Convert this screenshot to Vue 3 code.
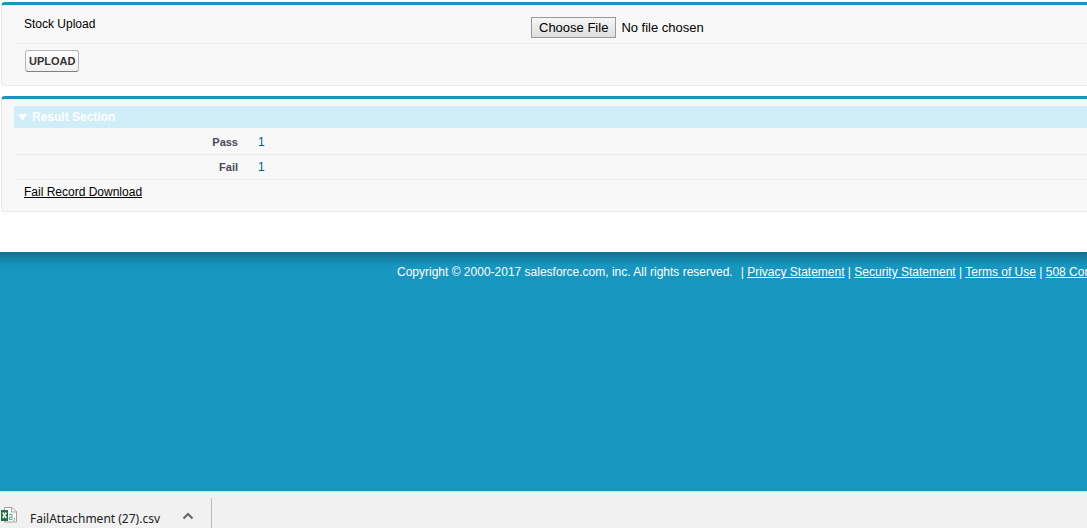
<script setup>
import { ref } from 'vue'

const open = ref(true)
const results = [
  { label: 'Pass', value: 1 },
  { label: 'Fail', value: 1 },
]
const links = ['Privacy Statement', 'Security Statement', 'Terms of Use', '508 Compliance']
</script>

<template>
  <div class="page">
    <main class="content">
      <form class="panel upload" @submit.prevent>
        <div class="file-row">
          <label class="cell" for="stock-file">Stock Upload</label>
          <input id="stock-file" class="file" type="file" />
        </div>
        <div class="actions">
          <button class="upload-btn" type="submit">UPLOAD</button>
        </div>
      </form>

      <section class="panel result">
        <h3 class="heading">
          <button class="toggle" type="button" :aria-expanded="open" @click="open = !open">
            <svg width="9" height="7" viewBox="0 0 9 7" aria-hidden="true">
              <path d="M0 0h9L4.5 7z" fill="#fff" />
            </svg>
            Result Section
          </button>
        </h3>
        <table v-show="open" class="results">
          <tbody>
            <tr v-for="r in results" :key="r.label">
              <th scope="row">{{ r.label }}</th>
              <td>{{ r.value }}</td>
            </tr>
          </tbody>
        </table>
        <div class="download"><a href="#">Fail Record Download</a></div>
      </section>
    </main>

    <footer class="footer">
      <span class="copyright">Copyright © 2000-2017 salesforce.com, inc. All rights reserved.</span>
      <template v-for="l in links" :key="l">| <a href="#">{{ l }}</a>{{ ' ' }}</template>
    </footer>

    <div class="shelf">
      <div class="item">
        <svg class="sheet" width="18" height="18" viewBox="0 0 18 18" aria-hidden="true">
          <path d="M4.5 1.500h7.500l4.500 4v10.500h-12z" fill="#fff" stroke="#a3a3a3" />
          <path d="M11.500 1.500v4.500h5" fill="none" stroke="#a3a3a3" />
          <path d="M1 4h7v11H1z" fill="#1e7145" />
          <path d="M2.700 6.500l3.600 5.500M6.300 6.500l-3.600 5.500" stroke="#fff" stroke-width="1.500" />
          <path d="M9 8.500h3v5H9.500V11H12M14.500 12v1.500l-1 1.500" fill="none" stroke="#5fae83" />
        </svg>
        <span class="name">FailAttachment (27).csv</span>
        <button class="more" type="button" aria-label="Download options">
          <svg width="12" height="8" viewBox="0 0 12 8" aria-hidden="true">
            <path d="M1.500 6.500L6 2l4.500 4.500" fill="none" stroke="#666" stroke-width="2" />
          </svg>
        </button>
      </div>
    </div>
  </div>
</template>

<style>
body {
  margin: 0;
  background: #fff;
}
</style>

<style scoped>
.page {
  display: flex;
  flex-direction: column;
  box-sizing: border-box;
  min-height: 100vh;
  padding-top: 2px;
  overflow: hidden;
  font: 12px/16px "Liberation Sans", Arial, sans-serif;
  color: #000;
}
.content {
  display: flex;
  flex-direction: column;
  gap: 10px;
  padding: 0 0 40px 1px;
}
.panel {
  box-sizing: border-box;
  padding-left: 12px;
  border: 1px solid #eaeaea;
  border-top: 3px solid #1797c0;
  border-right: 0;
  border-radius: 4px 0 0 4px;
  background: #f8f8f8;
}
.file-row {
  display: grid;
  grid-template-columns: 517px 1fr;
  align-items: start;
  height: 38px;
  border-bottom: 1px solid #ececec;
}
.cell {
  padding: 11px 10px 0;
}
.file {
  margin-top: 12px;
  font: 13px/15px "Liberation Sans", Arial, sans-serif;
}
.file::file-selector-button {
  box-sizing: border-box;
  height: 21px;
  margin: 0 5px 0 0;
  padding: 1px 7px;
  border: 1px solid #999;
  border-radius: 0;
  background: linear-gradient(#f6f6f6, #dedede);
  color: #000;
  font: inherit;
}
.actions {
  padding: 6px 11px 13px;
}
.upload-btn {
  display: block;
  box-sizing: border-box;
  height: 22px;
  padding: 0 3px;
  border: 1px solid #b5b5b5;
  border-bottom-color: #7f7f7f;
  border-radius: 3px;
  background: linear-gradient(#fff, #f0f0f0);
  color: #333;
  font: bold 11px/16px "Liberation Sans", Arial, sans-serif;
}
.result {
  padding-top: 7px;
}
.heading {
  margin: 0;
  background: #cfeef8;
}
.toggle {
  display: flex;
  align-items: center;
  gap: 5px;
  width: 100%;
  height: 22px;
  padding: 0 4px;
  border: 0;
  background: none;
  color: #fff;
  font: bold 12px/16px "Liberation Sans", Arial, sans-serif;
}
.results {
  width: 100%;
  margin-top: 2px;
  border-collapse: collapse;
}
.results th,
.results td {
  height: 24px;
  padding: 0;
  border-bottom: 1px solid #ececec;
}
.results th {
  width: 224px;
  color: #4a4a56;
  font-size: 11px;
  text-align: right;
}
.results td {
  padding-left: 20px;
  color: #005a84;
}
.download {
  padding: 4px 10px 11px;
}
.download a {
  color: #000;
}
.footer {
  flex: 1;
  padding: 12px 0 0 397px;
  background: linear-gradient(#10708f, #1797c0 14px);
  color: #fff;
  white-space: nowrap;
}
.footer a {
  color: #fff;
}
.copyright {
  margin-right: 8px;
}
.shelf {
  box-sizing: border-box;
  height: 37px;
  padding-top: 6px;
  border-top: 1px solid #d5dadd;
  background: #f1f1f1;
}
.item {
  display: flex;
  align-items: center;
  width: 211px;
  height: 30px;
  border-right: 1px solid #bcbcbc;
}
.sheet {
  margin-top: 4px;
}
.name {
  flex: 1;
  padding: 12px 0 0 12px;
  color: #222;
  font: 12px/18px "Noto Sans", "Open Sans", sans-serif;
  white-space: nowrap;
}
.more {
  display: flex;
  padding: 6px 17px 0 0;
  border: 0;
  background: none;
}
</style>
